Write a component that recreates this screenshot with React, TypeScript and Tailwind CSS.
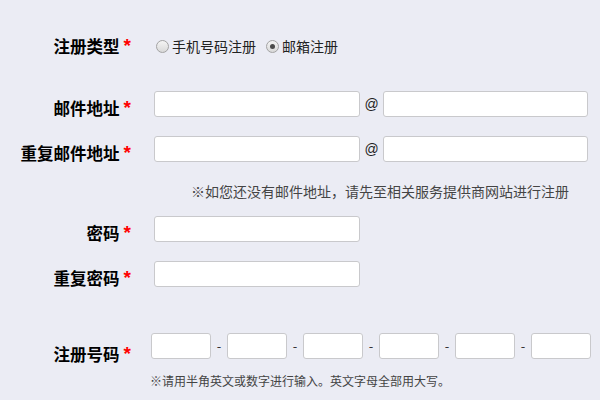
import { ReactNode } from "react"

const font = { fontFamily: '"Microsoft YaHei", "Noto Sans CJK SC", "Liberation Sans", sans-serif' }

function Label({ text, top }: { text: string; top: string }) {
  return (
    <div className={`w-[131px] ${top} flex justify-end items-start shrink-0 h-6 leading-6`}>
      <span className="text-[16.5px] font-bold text-black">{text}</span>
      <span className="ml-[4px] text-[19px] leading-6 font-bold text-[#ff0000] font-['Liberation_Sans',sans-serif]">*</span>
    </div>
  )
}

function Field({ className = "" }: { className?: string }) {
  return <div className={`h-[26px] bg-white border border-[#c9c9cc] rounded-[3px] ${className}`} />
}

function Radio({ checked, children }: { checked?: boolean; children: ReactNode }) {
  return (
    <span className="flex items-center">
      <span className="w-[13px] h-[13px] rounded-full border border-[#a3a3a3] bg-gradient-to-b from-[#f4f4f4] to-[#d9d9d9] flex items-center justify-center">
        {checked && <span className="w-[5px] h-[5px] rounded-full bg-[#4a4a4a]" />}
      </span>
      <span className="ml-[3px] text-[14px] text-[#222]">{children}</span>
    </span>
  )
}

export default function App() {
  return (
    <div className="w-[600px] h-[400px] overflow-hidden bg-[#ebecf4] pt-[33px]" style={font}>
      {/* 注册类型 */}
      <div className="flex items-start h-[26px]">
        <Label text="注册类型" top="mt-[1px]" />
        <div className="ml-[25px] flex items-center h-[26px] gap-[10px]">
          <Radio>手机号码注册</Radio>
          <Radio checked>邮箱注册</Radio>
        </div>
      </div>

      {/* 邮件地址 */}
      <div className="flex items-start h-[26px] mt-[32px]">
        <Label text="邮件地址" top="mt-[5px]" />
        <div className="ml-[23px] flex items-center">
          <Field className="w-[206px]" />
          <span className="w-[23px] text-center text-[14px] text-[#222] font-['Liberation_Sans',sans-serif]">@</span>
          <Field className="w-[205px]" />
        </div>
      </div>

      <div className="flex items-start h-[26px] mt-[19px]">
        <Label text="重复邮件地址" top="mt-[5px]" />
        <div className="ml-[23px] flex items-center">
          <Field className="w-[206px]" />
          <span className="w-[23px] text-center text-[14px] text-[#222] font-['Liberation_Sans',sans-serif]">@</span>
          <Field className="w-[205px]" />
        </div>
      </div>

      <p className="mt-[19px] ml-[191px] text-[14px] leading-5 text-[#444]">
        ※如您还没有邮件地址，请先至相关服务提供商网站进行注册
      </p>

      {/* 密码 */}
      <div className="flex items-start h-[26px] mt-[15px]">
        <Label text="密码" top="mt-[5px]" />
        <Field className="ml-[23px] w-[206px]" />
      </div>

      <div className="flex items-start h-[26px] mt-[19px]">
        <Label text="重复密码" top="mt-[5px]" />
        <Field className="ml-[23px] w-[206px]" />
      </div>

      {/* 注册号码 */}
      <div className="flex items-start h-[26px] mt-[46px]">
        <Label text="注册号码" top="mt-[9px]" />
        <div className="ml-[20px] flex items-center">
          {[0, 1, 2, 3, 4, 5].map(i => (
            <div key={i} className="flex items-center">
              {i > 0 && <span className="w-[16px] text-center text-[13px] text-[#333]">-</span>}
              <Field className="w-[60px]" />
            </div>
          ))}
        </div>
      </div>

      <p className="mt-[14px] ml-[150px] text-[12px] leading-4 text-[#444]">
        ※请用半角英文或数字进行输入。英文字母全部用大写。
      </p>
    </div>
  )
}
